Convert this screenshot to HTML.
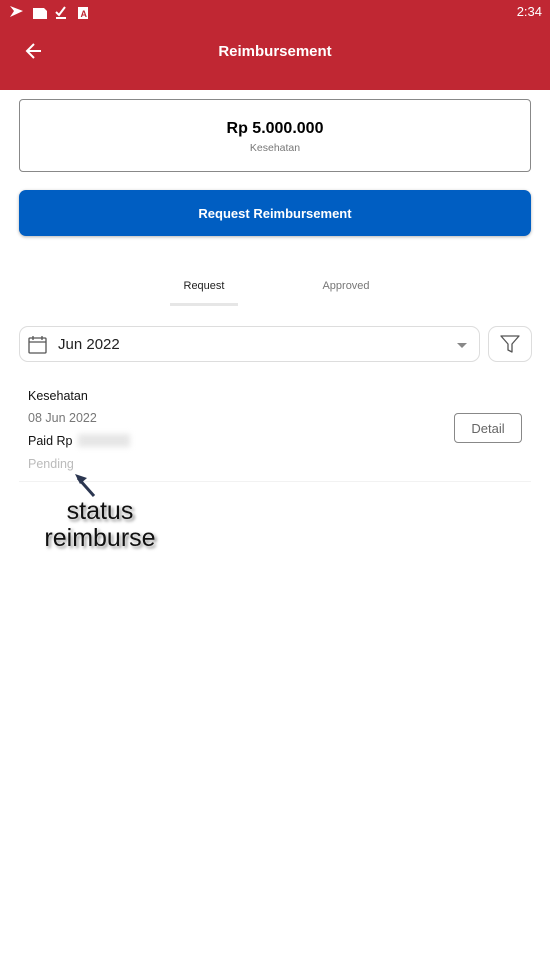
<!DOCTYPE html>
<html><head><meta charset="utf-8"><style>
*{margin:0;padding:0;box-sizing:border-box}
body{width:550px;height:976px;background:#fff;font-family:"Liberation Sans",sans-serif;position:relative;overflow:hidden}
.abs{position:absolute}
</style></head><body>
<div class="abs" style="left:0;top:0;width:550px;height:90px;background:#c02733"></div>
<svg class="abs" style="left:8px;top:3px" width="90" height="18">
<path d="M2 3 L15 8 L2 14 L6 8 Z" fill="#fff"/>
<path d="M25 5 L36 5 L39 8 L39 16 L25 16 Z" fill="#fff"/>
<path d="M48 9 L51 12 L57 4" stroke="#fff" stroke-width="2" fill="none"/><rect x="48" y="14" width="10" height="2" fill="#fff"/>
<rect x="70" y="4" width="10" height="12" fill="#fff"/><text x="72.5" y="14" font-size="9" font-weight="bold" fill="#c02733" font-family="Liberation Sans">A</text>
</svg>
<div class="abs" style="right:8px;top:4px;color:#fff;font-size:13px">2:34</div>
<svg class="abs" style="left:25px;top:42px" width="18" height="18"><path d="M16 9 H2 M9 2 L2 9 L9 16" stroke="#fff" stroke-width="2" fill="none"/></svg>
<div class="abs" style="left:0;width:550px;top:43px;text-align:center;color:#fff;font-size:15px;font-weight:bold">Reimbursement</div>
<div class="abs" style="left:19px;top:99px;width:512px;height:73px;border:1px solid #888;border-radius:4px"></div>
<div class="abs" style="left:0;width:550px;top:120px;text-align:center;font-size:16px;font-weight:bold">Rp 5.000.000</div>
<div class="abs" style="left:0;width:550px;top:142px;text-align:center;font-size:10.5px;color:#777">Kesehatan</div>
<div class="abs" style="left:19px;top:190px;width:512px;height:46px;background:#005ec2;border-radius:7px;box-shadow:0 1px 3px rgba(0,0,0,.3);color:#fff;font-size:13px;font-weight:bold;text-align:center;line-height:47px">Request Reimbursement</div>
<div class="abs" style="left:170px;width:68px;top:280px;text-align:center;font-size:11px;color:#222">Request</div>
<div class="abs" style="left:170px;width:68px;top:303px;height:3px;background:#e6e6e6"></div>
<div class="abs" style="left:300px;width:92px;top:280px;text-align:center;font-size:11px;color:#777">Approved</div>
<div class="abs" style="left:19px;top:326px;width:461px;height:36px;border:1px solid #ddd;border-radius:9px"></div>
<svg class="abs" style="left:28px;top:335px" width="20" height="19"><rect x="1" y="3" width="17" height="15" rx="1" fill="none" stroke="#555" stroke-width="1.3"/><path d="M1 7 H18 M5 1 V5 M14 1 V5" stroke="#555" stroke-width="1.3"/></svg>
<div class="abs" style="left:58px;top:336px;font-size:15px;color:#222">Jun 2022</div>
<svg class="abs" style="left:456px;top:341px" width="12" height="8"><path d="M1 2 L11 2 L6 7 Z" fill="#888"/></svg>
<div class="abs" style="left:488px;top:326px;width:44px;height:36px;border:1px solid #ddd;border-radius:9px"></div>
<svg class="abs" style="left:499px;top:334px" width="22" height="20"><path d="M2 2 H20 L13 10 V18 L9 16 V10 Z" fill="none" stroke="#555" stroke-width="1.3" stroke-linejoin="round"/></svg>
<div class="abs" style="left:28px;top:389px;font-size:12.5px;color:#111">Kesehatan</div>
<div class="abs" style="left:28px;top:411px;font-size:12.5px;color:#777">08 Jun 2022</div>
<div class="abs" style="left:28px;top:434px;font-size:12.5px;color:#111">Paid Rp</div>
<div class="abs" style="left:78px;top:434px;width:52px;height:13px;background:#e6e6e6;filter:blur(3px)"></div>
<div class="abs" style="left:28px;top:457px;font-size:12.5px;color:#bbb">Pending</div>
<div class="abs" style="left:454px;top:413px;width:68px;height:30px;border:1px solid #888;border-radius:4px;text-align:center;line-height:29px;font-size:13px;color:#666">Detail</div>
<div class="abs" style="left:19px;top:481px;width:512px;height:1px;background:#f2f2f2"></div>
<svg class="abs" style="left:72px;top:470px" width="28" height="30"><path d="M22 26 L6 8" stroke="#2b3650" stroke-width="3"/><path d="M3 4 L15 8 L8 14 Z" fill="#2b3650"/></svg>
<div class="abs" style="left:35px;width:130px;top:498px;text-align:center;font-size:25px;line-height:27px;color:#111;text-shadow:0 0 3px #fff,2px 2px 3px #777">status<br>reimburse</div>
</body></html>
